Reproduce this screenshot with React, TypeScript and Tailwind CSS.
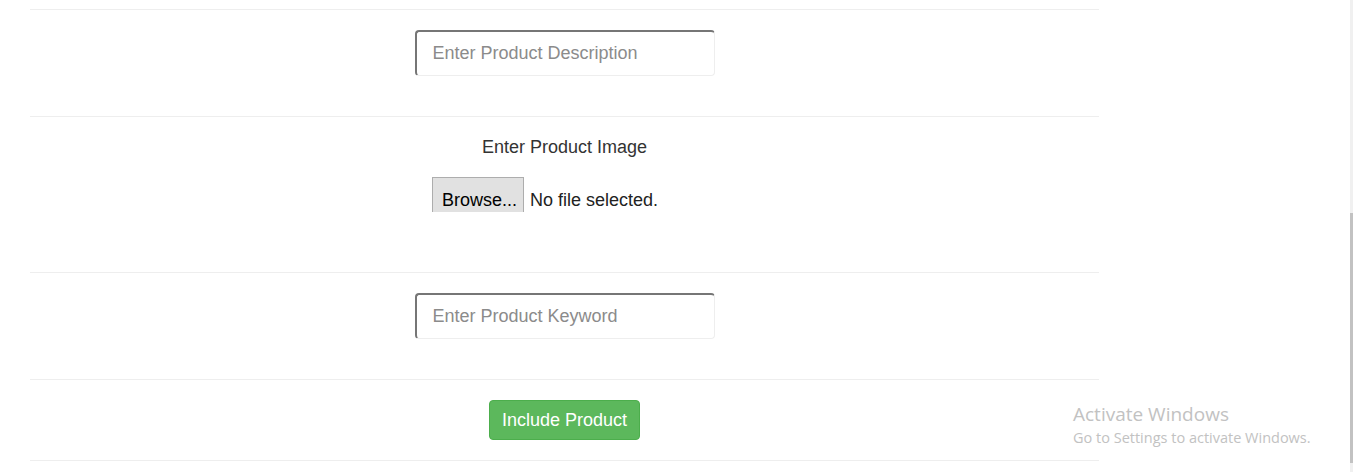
const font = { fontFamily: '"Liberation Sans", Arial, sans-serif' };

const TextBox = ({ placeholder }: { placeholder: string }) => (
  <input
    type="text"
    placeholder={placeholder}
    className="w-[300px] h-[46px] rounded-[4px] border-t-2 border-l-2 border-r border-b border-t-[#767676] border-l-[#767676] border-r-[#eeeeee] border-b-[#eeeeee] pl-4 text-[18px] text-[#333] placeholder:text-[#8b8b8b] outline-none bg-white"
  />
);

export default function App() {
  return (
    <div className="relative w-full h-[472px] bg-white overflow-hidden" style={font}>
      <div className="pt-[9px]">
        <div className="ml-[30px] w-[1069px] border-b border-[#eeeeee]">
          {/* description */}
          <div className="h-[107px] border-t border-[#eeeeee] flex justify-center pt-5">
            <TextBox placeholder="Enter Product Description" />
          </div>

          {/* image */}
          <div className="h-[156px] border-t border-[#eeeeee] flex flex-col items-center pt-5">
            <label className="text-[18px] leading-5 text-[#333]">Enter Product Image</label>
            <div className="mt-5 w-[265px] h-[35px] overflow-hidden">
              <div className="flex items-start">
                <span className="h-[40px] w-[92px] border border-[#adadad] bg-[#e1e1e1] text-black text-[18px] leading-none pt-[13px] pl-[9px]">
                  Browse...
                </span>
                <span className="ml-[6px] pt-[14px] text-[18px] leading-none text-[#222]">No file selected.</span>
              </div>
            </div>
          </div>

          {/* keyword */}
          <div className="h-[107px] border-t border-[#eeeeee] flex justify-center pt-5">
            <TextBox placeholder="Enter Product Keyword" />
          </div>

          {/* submit */}
          <div className="h-[81px] border-t border-[#eeeeee] flex justify-center pt-5">
            <button className="h-10 px-[12px] rounded-[4px] bg-[#5cb85c] border border-[#4cae4c] text-white text-[18px]">
              Include Product
            </button>
          </div>
        </div>
      </div>

      {/* windows watermark */}
      <div
        className="absolute left-[1073px] top-[402px] text-[#c2c2c2]"
        style={{ fontFamily: '"Open Sans", "Noto Sans", sans-serif' }}
      >
        <div className="text-[19px] leading-6">Activate Windows</div>
        <div className="text-[14.5px] leading-[20px] mt-[2px]">Go to Settings to activate Windows.</div>
      </div>

      {/* scrollbar */}
      <div className="absolute right-0 top-0 h-full w-[3px] bg-[#f0f0f0]">
        <div className="mt-[213px] h-[250px] bg-[#c2c2c2]" />
      </div>
    </div>
  );
}
